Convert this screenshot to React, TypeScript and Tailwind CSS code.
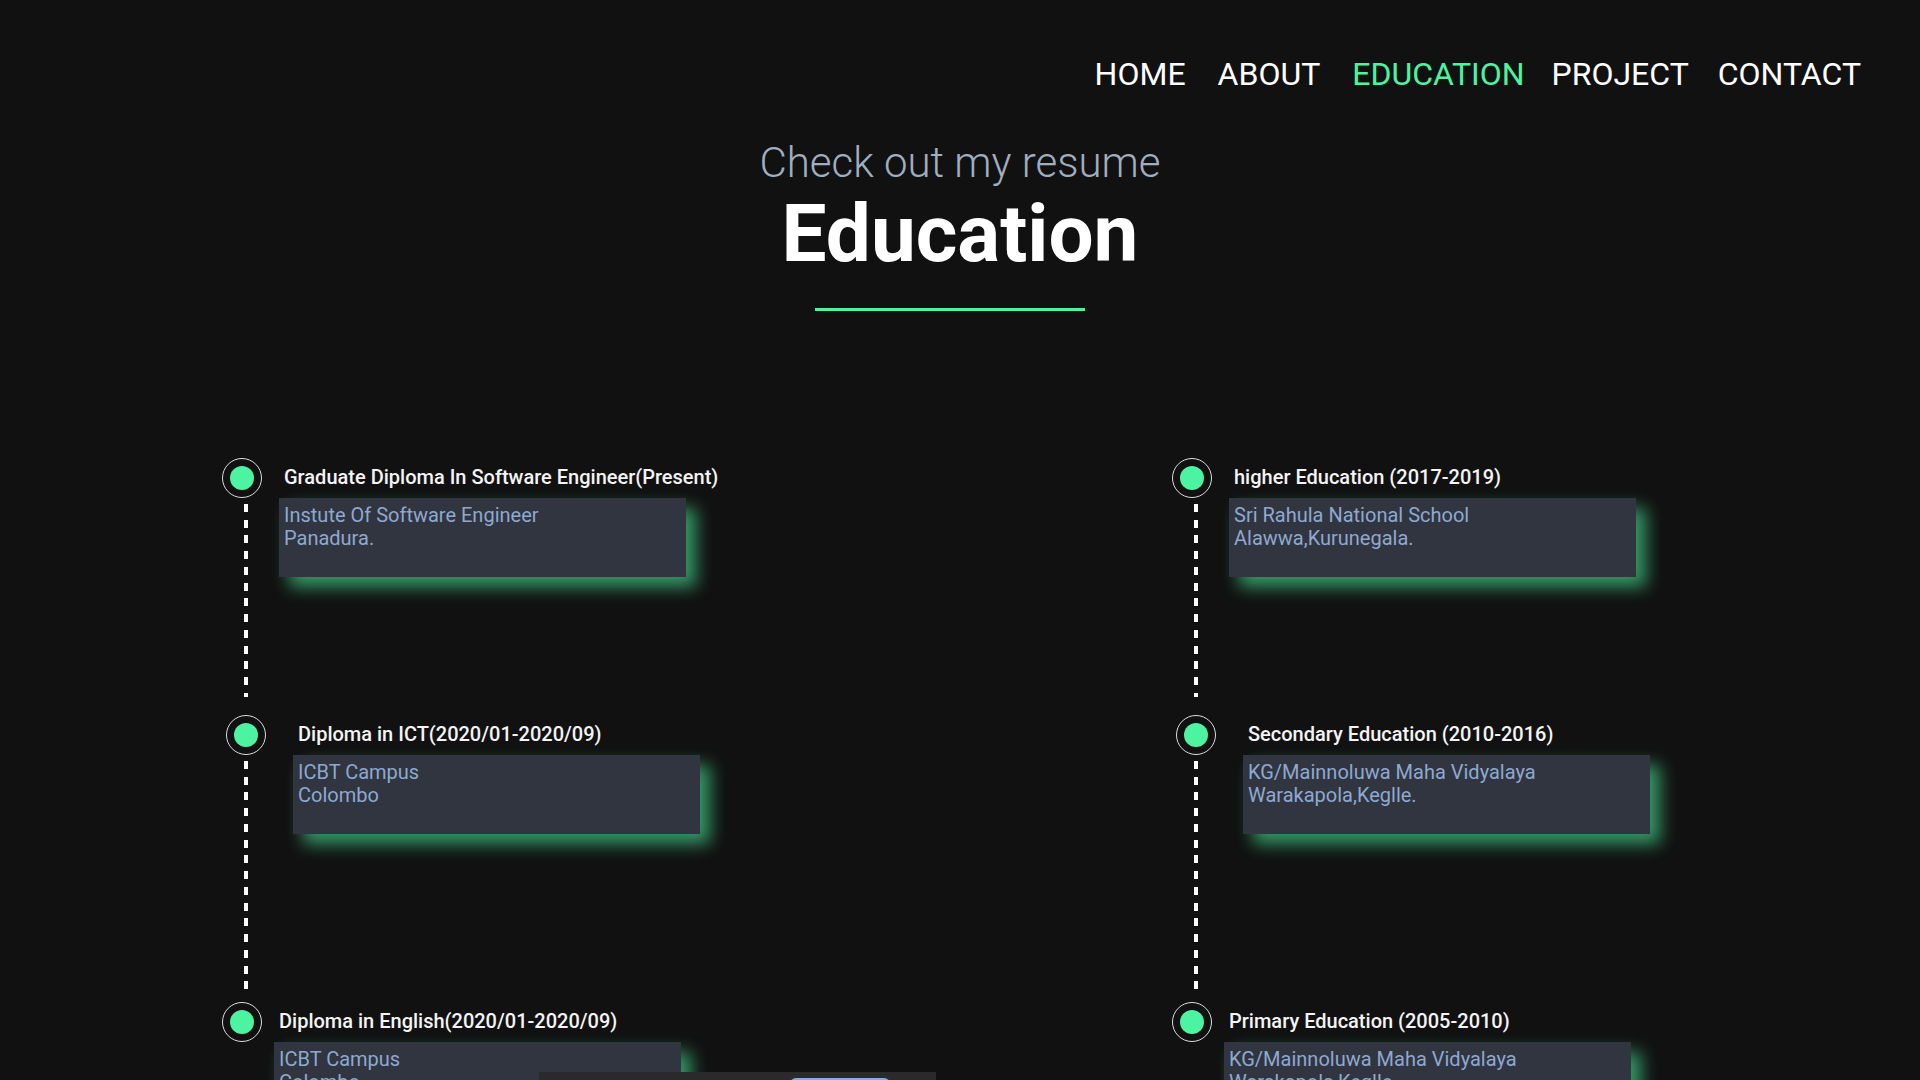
import React from 'react';

type EduItem = {
  title: string;
  lines: string[];
  wrap: string;
  circle: string;
  titleGap: string;
  box: string;
  line: string;
};

const leftItems: EduItem[] = [
  {
    title: 'Graduate Diploma In Software Engineer(Present)',
    lines: ['Instute Of Software Engineer', 'Panadura.'],
    wrap: 'mb-[18px]',
    circle: 'ml-[222px]',
    titleGap: 'ml-[22px]',
    box: 'ml-[31px]',
    line: 'h-[193px]',
  },
  {
    title: 'Diploma in ICT(2020/01-2020/09)',
    lines: ['ICBT Campus', 'Colombo'],
    wrap: 'mb-[10px]',
    circle: 'ml-[226px]',
    titleGap: 'ml-[32px]',
    box: 'ml-[45px]',
    line: 'h-[231px]',
  },
  {
    title: 'Diploma in English(2020/01-2020/09)',
    lines: ['ICBT Campus', 'Colombo'],
    wrap: 'mb-0',
    circle: 'ml-[222px]',
    titleGap: 'ml-[17px]',
    box: 'ml-[26px]',
    line: 'h-0',
  },
];

const rightItems: EduItem[] = [
  {
    title: 'higher Education (2017-2019)',
    lines: ['Sri Rahula National School', 'Alawwa,Kurunegala.'],
    wrap: 'mb-[18px]',
    circle: 'ml-[222px]',
    titleGap: 'ml-[22px]',
    box: 'ml-[31px]',
    line: 'h-[193px]',
  },
  {
    title: 'Secondary Education (2010-2016)',
    lines: ['KG/Mainnoluwa Maha Vidyalaya', 'Warakapola,Keglle.'],
    wrap: 'mb-[10px]',
    circle: 'ml-[226px]',
    titleGap: 'ml-[32px]',
    box: 'ml-[45px]',
    line: 'h-[231px]',
  },
  {
    title: 'Primary Education (2005-2010)',
    lines: ['KG/Mainnoluwa Maha Vidyalaya', 'Warakapola,Keglle.'],
    wrap: 'mb-0',
    circle: 'ml-[222px]',
    titleGap: 'ml-[17px]',
    box: 'ml-[26px]',
    line: 'h-0',
  },
];

const navLinks = [
  { label: 'HOME', cls: 'ml-0' },
  { label: 'ABOUT', cls: 'ml-[32px]' },
  { label: 'EDUCATION', cls: 'ml-[32px]' },
  { label: 'PROJECT', cls: 'ml-[27px]' },
  { label: 'CONTACT', cls: 'ml-[29px]' },
];

const TimelineItem: React.FC<{ item: EduItem }> = ({ item }) => (
  <div className={item.wrap}>
    <div className="flex items-center h-10">
      <div
        className={`${item.circle} w-10 h-10 shrink-0 rounded-full border border-[#dcdcdc] flex items-center justify-center`}
      >
        <div className="w-6 h-6 rounded-full bg-[#4cf3a1]" />
      </div>
      <h4
        className={`${item.titleGap} mb-[2px] text-[20px] leading-[normal] font-medium text-[#f4f4f4] whitespace-nowrap`}
      >
        {item.title}
      </h4>
    </div>
    <div className="flex items-start">
      <div className="w-[244px] shrink-0" />
      <div
        className={`w-1 mt-[6px] shrink-0 bg-[repeating-linear-gradient(to_bottom,#ffffff_0px,#ffffff_8px,transparent_8px,transparent_15.75px)] ${item.line}`}
      />
      <div
        className={`${item.box} w-[407px] h-[79px] shrink-0 bg-[#31353f] px-[5px] pt-[6px] text-[20px] leading-[22.5px] text-[#8ea9d0] shadow-[10px_10px_16px_rgba(76,243,161,0.6)]`}
      >
        {item.lines.map((l) => (
          <p key={l}>{l}</p>
        ))}
      </div>
    </div>
  </div>
);

const App: React.FC = () => {
  return (
    <div className="relative min-h-screen bg-[#111111] font-['Roboto',sans-serif] pb-40">
      <nav className="flex justify-end pt-[55px] pr-[59px]">
        {navLinks.map((link) => (
          <a
            key={link.label}
            className={`${link.cls} text-[32px] leading-[normal] ${link.label === 'EDUCATION' ? 'text-[#4cf3a1]' : 'text-white'}`}
          >
            {link.label}
          </a>
        ))}
      </nav>

      <header className="mt-[45px] text-center">
        <h3 className="text-[42px] leading-[normal] font-light text-[#a0aec0]">Check out my resume</h3>
        <h1 className="text-[80px] leading-[normal] font-bold text-white">Education</h1>
      </header>

      <div className="w-[1900px]">
        <div className="mx-auto mt-[27px] w-[270px] h-[3px] bg-[#4cf3a1]" />

        <div className="grid grid-cols-2 mt-[147px]">
          <div className="flex flex-col">
            {leftItems.map((item) => (
              <TimelineItem key={item.title} item={item} />
            ))}
          </div>
          <div className="flex flex-col">
            {rightItems.map((item) => (
              <TimelineItem key={item.title} item={item} />
            ))}
          </div>
        </div>
      </div>

      {/* bottom overlay bar */}
      <div className="absolute top-[1072px] left-[539px] w-[397px] h-[60px] bg-[#2a2a2d]">
        <div className="absolute top-[6px] left-[251px] w-[100px] h-10 rounded-t-md bg-[#84aaea]" />
      </div>
    </div>
  );
};

export default App;
